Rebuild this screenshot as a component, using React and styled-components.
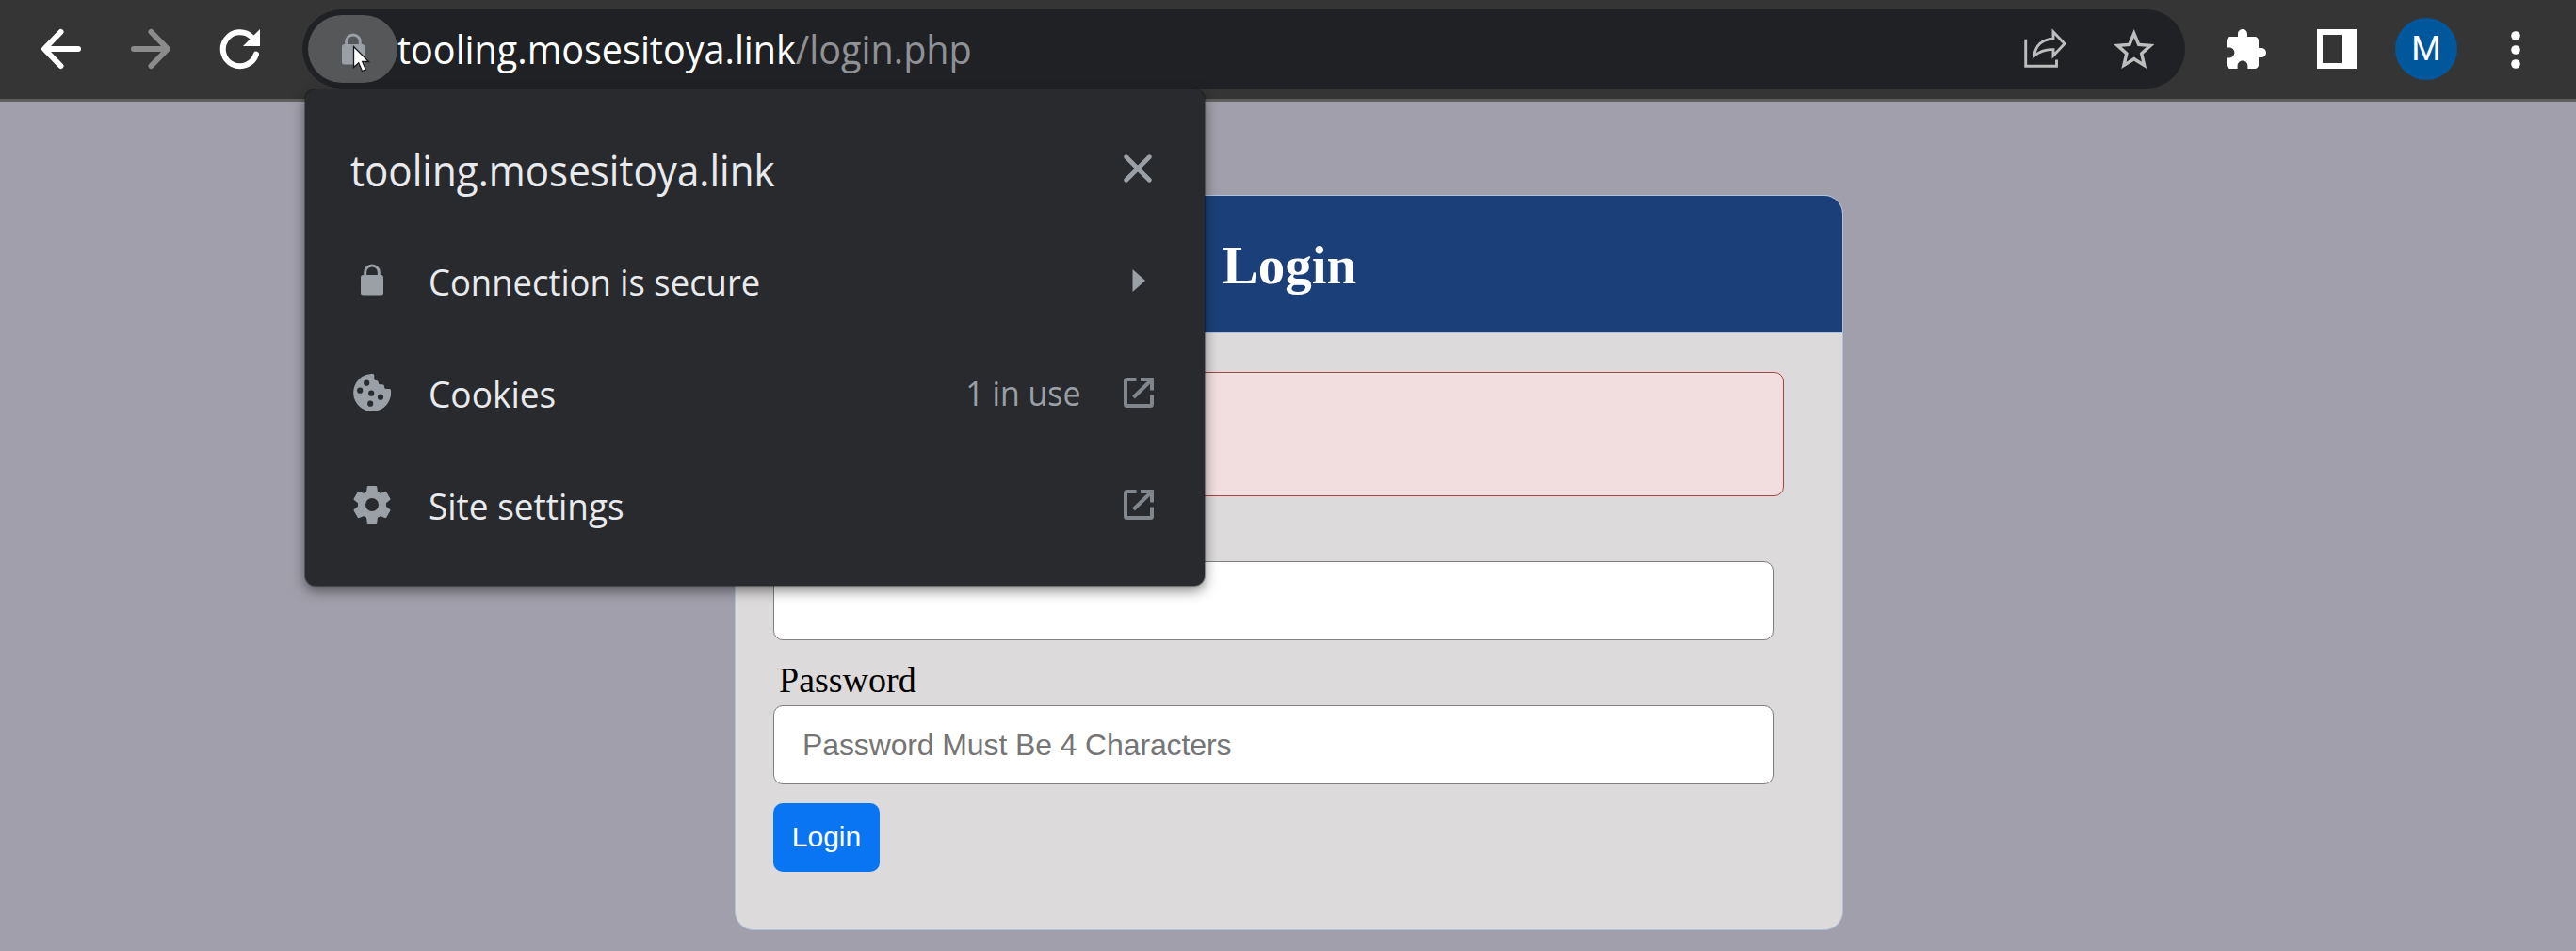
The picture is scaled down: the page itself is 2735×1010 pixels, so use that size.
import React from "react";
import styled, { createGlobalStyle } from "styled-components";

const GlobalStyle = createGlobalStyle`
  * { box-sizing: border-box; }
  html, body { margin: 0; padding: 0; }
  body { background: #a09fab; overflow: hidden; }
`;

const uiFont = `"Open Sans", "Noto Sans", sans-serif`;

const Browser = styled.div`
  position: relative;
  width: 2735px;
  height: 1010px;
  display: flex;
  flex-direction: column;
  background: #a09fab;
  overflow: hidden;
`;

const Toolbar = styled.header`
  flex: none;
  height: 108px;
  padding: 10px 16px 11px 17px;
  display: flex;
  align-items: flex-start;
  background: #353535;
  border-bottom: 3px solid #5f5f5f;
`;

const ToolButton = styled.button`
  flex: none;
  width: ${(p) => p.$width || 95.4}px;
  height: 84px;
  padding: 0;
  border: 0;
  background: none;
  color: ${(p) => p.$color || "#fff"};
  display: flex;
  align-items: center;
  justify-content: center;
  svg { display: block; }
`;

const Omnibox = styled.div`
  flex: 1;
  height: 84px;
  margin: 0 17px 0 18px;
  padding: 0 7px 0 6px;
  display: flex;
  align-items: center;
  background: #202124;
  border-radius: 42px;
`;

const SiteChip = styled.div`
  position: relative;
  flex: none;
  width: 95px;
  height: 72px;
  display: flex;
  align-items: center;
  justify-content: center;
  background: #555759;
  border-radius: 36px;
  color: #9aa0a6;
`;

const Pointer = styled.svg`
  position: absolute;
  left: 47px;
  top: 32px;
`;

const Narrow = styled.span`
  display: inline-block;
  transform: scaleX(${(p) => p.$fit});
  transform-origin: ${(p) => p.$origin || "left"} center;
`;

const Url = styled.div`
  flex: 1;
  font: 42px/60px ${uiFont};
  color: #fff;
  white-space: nowrap;
`;

const UrlPath = styled.span`
  color: #8f9194;
`;

const Avatar = styled.span`
  width: 66px;
  height: 66px;
  display: flex;
  align-items: center;
  justify-content: center;
  border-radius: 50%;
  background: #01579b;
  color: #fff;
  font: 36px/66px Roboto, sans-serif;
`;

const Page = styled.main`
  flex: 1;
  display: flex;
  flex-direction: column;
  align-items: center;
  padding-top: 99px;
`;

const Card = styled.section`
  width: 1177px;
  height: 781px;
  display: flex;
  flex-direction: column;
  border: 1px solid #b0c4de;
  border-radius: 20px;
  background: #dcdada;
  overflow: hidden;
  margin-left: 2px;
`;

const CardHeader = styled.h1`
  flex: none;
  height: 146px;
  margin: 0;
  padding-left: 1px;
  border-bottom: 1px solid #b0c4de;
  background: #1b4079;
  color: #fff;
  text-align: center;
  font: bold 57px/148px "Liberation Serif", "Times New Roman", serif;
`;

const Form = styled.form`
  display: flex;
  flex-direction: column;
  align-items: flex-start;
  padding: 41px 62px 0 40px;
`;

const Alert = styled.div`
  width: 100%;
  height: 132px;
  border: 1px solid #a94442;
  border-radius: 10px;
  background: #f2dede;
`;

const Label = styled.label`
  height: 69px;
  padding: 0 0 1px 6px;
  display: flex;
  align-items: flex-end;
  color: #000;
  font: 38px/52px "Liberation Serif", "Times New Roman", serif;
`;

const Input = styled.input`
  width: 1062px;
  height: 84px;
  padding: 0 30px;
  border: 1px solid gray;
  border-radius: 10px;
  background: #fff;
  font: 32px "Liberation Sans", Arial, sans-serif;
  letter-spacing: -0.12px;
  outline: none;
  &::placeholder { color: #757575; opacity: 1; }
`;

const Submit = styled.button`
  width: 113px;
  height: 73px;
  margin-top: 20px;
  padding: 0 0 2px;
  border: 0;
  border-radius: 10px;
  background: #0a75f3;
  color: #fff;
  font: 30px/71px "Liberation Sans", Arial, sans-serif;
`;

const Popup = styled.aside`
  position: absolute;
  left: 324px;
  top: 95px;
  width: 955px;
  height: 527px;
  padding-top: 25px;
  display: flex;
  flex-direction: column;
  border-radius: 11px;
  background: #292a2d;
  box-shadow: 0 0 0 1px rgba(0, 0, 0, 0.3), 0 5px 14px rgba(0, 0, 0, 0.5);
  font-family: ${uiFont};
  color: #e8eaed;
`;

const PopupHeader = styled.div`
  height: 118px;
  padding: 0 56px 0 48px;
  display: flex;
  align-items: center;
  justify-content: space-between;
  font-size: 45px;
  line-height: 60px;
  white-space: nowrap;
  color: #e8eaed;
  svg { color: #9aa0a6; }
`;

const PopupTitle = styled.span`
  padding-top: 3px;
`;

const PopupRow = styled.div`
  height: 119px;
  padding: 0 54px 0 51px;
  display: flex;
  align-items: center;
  font-size: 39px;
  line-height: 52px;
  white-space: nowrap;
  color: #9aa0a6;
`;

const RowIcon = styled.span`
  width: 40px;
  margin-right: 40px;
  padding-bottom: ${(p) => p.$lift || 0}px;
  display: flex;
  justify-content: center;
`;

const RowLabel = styled.span`
  flex: 1;
  padding-top: 3px;
  color: #e8eaed;
`;

const RowNote = styled.span`
  margin-right: 44px;
  font-size: 37px;
`;

const RowAction = styled.span`
  width: 33px;
  display: flex;
  justify-content: center;
  color: #80868b;
`;

const BackIcon = ({ flip }) => (
  <svg width="44" height="44" viewBox="0 0 44 44" fill="none" stroke="currentColor" strokeWidth="6" strokeLinecap="round" strokeLinejoin="round" transform={flip ? "scale(-1 1)" : undefined}>
    <path d="M21.5 4L4 22l17.500 18M4.500 22H40" />
  </svg>
);

const ReloadIcon = () => (
  <svg width="44" height="44" viewBox="0 0 44 44">
    <path d="M39 27.500A18 18 0 1 1 34.500 9.500" fill="none" stroke="currentColor" strokeWidth="6" strokeLinecap="round" />
    <path d="M43 1v18H25z" fill="currentColor" />
  </svg>
);

const LockIcon = () => (
  <svg width="24" height="34" viewBox="0 0 24 34">
    <rect y="12" width="24" height="21.500" rx="2.500" fill="currentColor" />
    <path d="M4.700 13V9.200a7.300 7.300 0 0 1 14.600 0V13" fill="none" stroke="currentColor" strokeWidth="3" />
  </svg>
);

const ShareIcon = () => (
  <svg width="48" height="46" viewBox="0 0 48 46" fill="none" stroke="currentColor" strokeWidth="2.900">
    <path d="M2.700 12.700V41.300H35.500V34.500" />
    <path d="M32 4.800L44 17.500L32 30.200V23.700C24 23.200 17 26 11.700 30.500C13 20 19.500 12.700 32 12.200Z" />
  </svg>
);

const StarIcon = () => (
  <svg width="43.500" height="42" viewBox="2 2 20 19" preserveAspectRatio="none" fill="currentColor">
    <path d="M22 9.240l-7.190-.62L12 2 9.190 8.630 2 9.240l5.460 4.730L5.820 21 12 17.270 18.180 21l-1.630-7.030L22 9.240zM12 15.400l-3.760 2.270 1-4.280-3.320-2.880 4.380-.38L12 6.100l1.710 4.040 4.380.38-3.320 2.880 1 4.280L12 15.400z" />
  </svg>
);

const PuzzleIcon = () => (
  <svg width="42" height="42" viewBox="2 1 21 21" fill="currentColor">
    <path d="M20.500 11H19V7c0-1.100-.9-2-2-2h-4V3.500C13 2.120 11.880 1 10.500 1S8 2.120 8 3.500V5H4c-1.100 0-1.990.9-1.990 2v3.800H3.500c1.490 0 2.700 1.210 2.700 2.700s-1.210 2.700-2.700 2.700H2V20c0 1.100.9 2 2 2h3.800v-1.500c0-1.490 1.210-2.700 2.700-2.700 1.490 0 2.700 1.210 2.700 2.700V22H17c1.100 0 2-.9 2-2v-4h1.500c1.380 0 2.500-1.120 2.500-2.500S21.880 11 20.500 11z" />
  </svg>
);

const PanelIcon = () => (
  <svg width="42" height="42" viewBox="0 0 42 42" fill="currentColor" fillRule="evenodd">
    <path d="M0 0H42V42H0zM6 6V36H27V6z" />
  </svg>
);

const MenuIcon = () => (
  <svg width="12" height="42" viewBox="0 0 12 42" fill="currentColor">
    <circle cx="6" cy="7" r="4.800" />
    <circle cx="6" cy="22" r="4.800" />
    <circle cx="6" cy="37" r="4.800" />
  </svg>
);

const CloseIcon = () => (
  <svg width="30" height="30" viewBox="0 0 30 30" fill="none" stroke="currentColor" strokeWidth="4.800" strokeLinecap="round">
    <path d="M2.700 2.700L27.300 27.300M27.300 2.700L2.700 27.300" />
  </svg>
);

const CookieIcon = () => (
  <svg width="40" height="40" viewBox="-20 -20 40 40">
    <path fill="currentColor" fillRule="evenodd" d="M.8 -20A20 20 0 1 0 20 -2.500Q20 -4 18.500 -4H15Q13 -4 13 -6Q13 -8.800 11 -8.800H8.500Q6.700 -8.800 6.700 -11Q6.500 -13 4.500 -13H4Q2.300 -13 2.300 -15V-18.500Q2.300 -20 .8 -20z" />
    {[[-5.8, -10.3], [-12.8, -2.3], [-0.8, 0.7], [9, 4.7], [-1.8, 11.7]].map(([x, y]) => (
      <circle key={x} cx={x} cy={y} r="3.100" fill="#292a2d" />
    ))}
  </svg>
);

const GearIcon = () => (
  <svg width="40" height="40" viewBox="-20 -20 40 40" fill="currentColor">
    <circle r="11" fill="none" stroke="currentColor" strokeWidth="8" />
    {[0, 60, 120, 180, 240, 300].map((a) => (
      <path key={a} transform={`rotate(${a})`} d="M-4.300 -20H4.300L5.200 -19.300L6 -13.500L8 -12L5 -10H-5L-8 -12L-6 -13.500L-5.200 -19.300z" />
    ))}
  </svg>
);

const ArrowIcon = () => (
  <svg width="14" height="24" viewBox="0 0 14 24" fill="#9aa0a6">
    <path d="M.5 0L14 12L.5 24z" />
  </svg>
);

const LaunchIcon = () => (
  <svg width="32" height="32" viewBox="0 0 32 32" fill="none" stroke="currentColor" strokeWidth="4">
    <path d="M13.500 2H3.500Q2 2 2 3.500V28.500Q2 30 3.500 30H28.500Q30 30 30 28.500V18.500" />
    <path d="M18 2H30V13.500M29.500 2.500L10.500 21" />
  </svg>
);

export default function App() {
  return (
    <>
      <GlobalStyle />
      <Browser>
        <Toolbar>
          <ToolButton><BackIcon /></ToolButton>
          <ToolButton $color="#8b8b8b"><BackIcon flip /></ToolButton>
          <ToolButton><ReloadIcon /></ToolButton>
          <Omnibox>
            <SiteChip>
              <LockIcon />
              <Pointer width="22" height="30" viewBox="0 0 22 30">
                <path d="M1.500 1.500V23.500L6.700 18.800L10.500 27.500L14.300 25.800L10.700 17.500H17.500Z" fill="#fff" stroke="#16161d" strokeWidth="1.300" />
              </Pointer>
            </SiteChip>
            <Url>
              <Narrow $fit={0.941}>
                tooling.mosesitoya.link<UrlPath>/login.php</UrlPath>
              </Narrow>
            </Url>
            <ToolButton $width={94.5} $color="#bdbdbd"><ShareIcon /></ToolButton>
            <ToolButton $width={94.5} $color="#bdbdbd"><StarIcon /></ToolButton>
          </Omnibox>
          <ToolButton><PuzzleIcon /></ToolButton>
          <ToolButton><PanelIcon /></ToolButton>
          <ToolButton><Avatar>M</Avatar></ToolButton>
          <ToolButton><MenuIcon /></ToolButton>
        </Toolbar>

        <Page>
          <Card>
            <CardHeader>Login</CardHeader>
            <Form>
              <Alert />
              <Label />
              <Input type="text" />
              <Label>Password</Label>
              <Input type="password" placeholder="Password Must Be 4 Characters" />
              <Submit type="button">Login</Submit>
            </Form>
          </Card>
        </Page>

        <Popup>
          <PopupHeader>
            <PopupTitle><Narrow $fit={0.936}>tooling.mosesitoya.link</Narrow></PopupTitle>
            <CloseIcon />
          </PopupHeader>
          <PopupRow>
            <RowIcon $lift={2}><LockIcon /></RowIcon>
            <RowLabel><Narrow $fit={0.934}>Connection is secure</Narrow></RowLabel>
            <RowAction><ArrowIcon /></RowAction>
          </PopupRow>
          <PopupRow>
            <RowIcon><CookieIcon /></RowIcon>
            <RowLabel><Narrow $fit={0.95}>Cookies</Narrow></RowLabel>
            <RowNote><Narrow $fit={0.915} $origin="right">1 in use</Narrow></RowNote>
            <RowAction><LaunchIcon /></RowAction>
          </PopupRow>
          <PopupRow>
            <RowIcon><GearIcon /></RowIcon>
            <RowLabel><Narrow $fit={0.948}>Site settings</Narrow></RowLabel>
            <RowAction><LaunchIcon /></RowAction>
          </PopupRow>
        </Popup>
      </Browser>
    </>
  );
}
